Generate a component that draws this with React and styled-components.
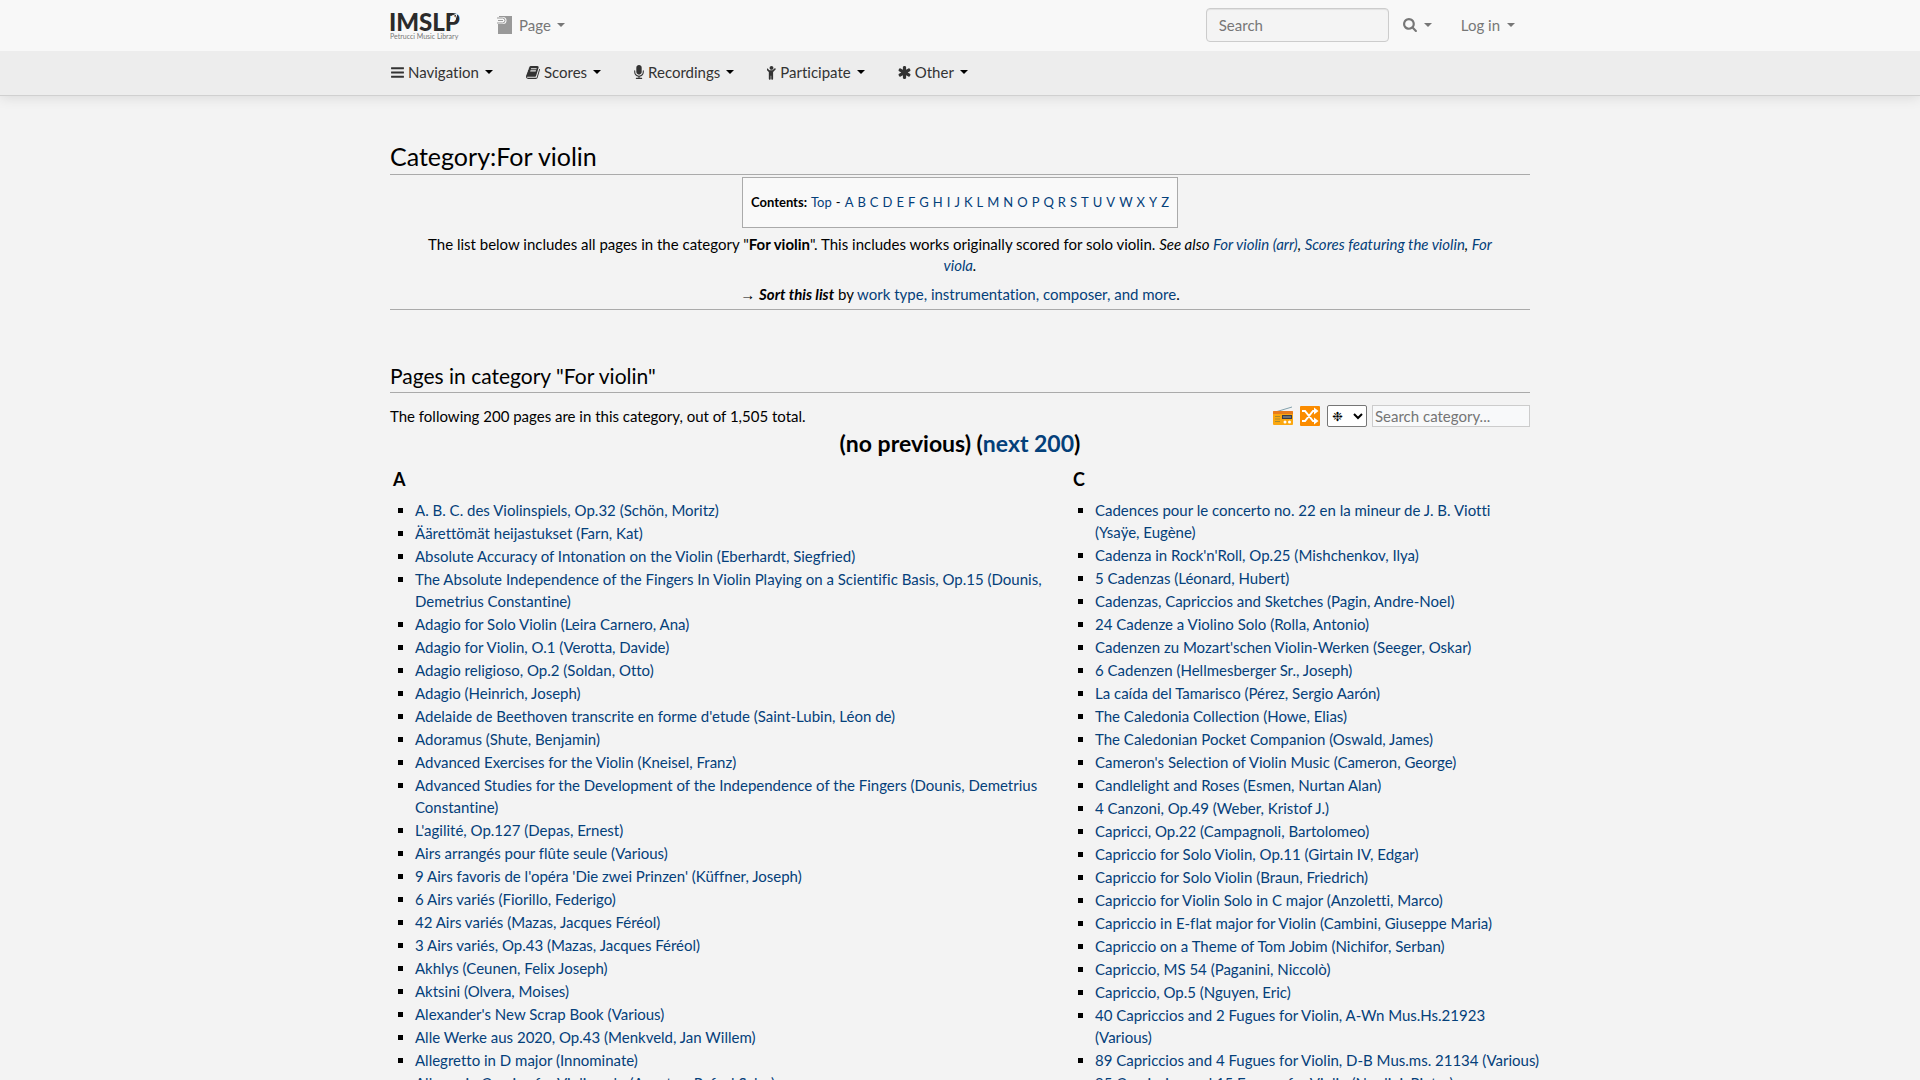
import React from "react";
import styled, { createGlobalStyle } from "styled-components";

const Global = createGlobalStyle`
  *, *::before, *::after { box-sizing: border-box; }
  body {
    margin: 0;
    background: #f3f3f3;
    color: #000;
    font-family: Lato, "Open Sans", sans-serif;
    font-size: 15px;
    line-height: 22px;
    font-variant-ligatures: none;
  }
  button, input, select { font: inherit; }
`;

const Container = styled.div`
  max-width: 1170px;
  margin: 0 auto;
  padding: 0 15px;
`;

const TopBar = styled.header`
  position: relative;
  z-index: 1;
  background: #f8f8f8;
`;

const TopRow = styled(Container)`
  display: flex;
  align-items: center;
  height: 51px;
  padding-bottom: 2px;
`;

const Logo = styled.a`
  display: block;
  width: 70px;
  height: 32px;
  margin-right: 22px;
`;

const Spacer = styled.div`
  flex: 1;
`;

const SearchBox = styled.input`
  width: 183px;
  height: 34px;
  padding: 0 12px;
  border: 1px solid #ccc;
  border-radius: 4px;
  background: #f4f4f4;
  box-shadow: inset 0 1px 1px rgba(0, 0, 0, 0.075);
  &::placeholder { color: #777; opacity: 1; }
`;

const MenuButton = styled.button`
  display: flex;
  align-items: center;
  gap: ${(p) => p.$gap || 4}px;
  padding: 0 ${(p) => p.$pad || 15}px;
  border: 0;
  background: none;
  color: ${(p) => (p.$muted ? "#777" : "#333")};
  cursor: pointer;
`;

const Caret = styled.span`
  margin-left: ${(p) => (p.$muted ? 0 : 2)}px;
  border-top: 4px solid ${(p) => (p.$muted ? "#777" : "#000")};
  border-left: 4px solid transparent;
  border-right: 4px solid transparent;
`;

const SubBar = styled.nav`
  background: #ededed;
  border-bottom: 1px solid #d0d0d0;
  box-shadow: 0 2px 12px rgba(0, 0, 0, 0.1);
`;

const SubRow = styled(Container)`
  display: flex;
  align-items: center;
  gap: 3px;
  height: 44px;
  padding-bottom: 2px;
  > button:first-child { padding-left: 1px; }
`;

const Main = styled(Container).attrs({ as: "main" })`
  padding-top: 43px;
`;

const Title = styled.h1`
  margin: 0;
  padding-bottom: 1px;
  border-bottom: 1px solid #aaa;
  font-size: 25px;
  line-height: 34px;
  font-weight: 400;
`;

const Subtitle = styled.h2`
  margin: 51px 0 0;
  padding-bottom: 1px;
  border-bottom: 1px solid #aaa;
  font-size: 21px;
  line-height: 30px;
  font-weight: 400;
`;

const Link = styled.a`
  color: #04407a;
  text-decoration: none;
  &:hover { text-decoration: underline; }
`;

const Intro = styled.div`
  display: flex;
  flex-direction: column;
  align-items: center;
  padding: 2px 24px 4px;
  border-bottom: 1px solid #aaa;
  text-align: center;
  line-height: 21px;
`;

const Toc = styled.div`
  display: flex;
  flex-wrap: wrap;
  gap: 4px;
  padding: 13px 8px 14px;
  border: 1px solid #aaa;
  background: #f9f9f9;
  font-size: 13px;
  line-height: 22px;
`;

const Paragraph = styled.p`
  margin: ${(p) => p.$top}px 0 0;
`;

const Arrow = styled.span`
  font-family: "Open Sans", sans-serif;
`;

const Summary = styled.div`
  display: flex;
  align-items: center;
  gap: 5px;
  padding-top: 12px;
`;

const IconButton = styled.button`
  display: flex;
  margin-right: 2px;
  padding: 0;
  border: 0;
  background: none;
`;

const CategorySelect = styled.select`
  width: 40px;
  height: 22px;
  border: 1px solid #767676;
  border-radius: 2px;
  background: #fff;
  color: #000;
  font-family: "DejaVu Sans", sans-serif;
  font-size: 13px;
`;

const CategorySearch = styled.input`
  width: 158px;
  height: 22px;
  padding: 1px 2px;
  border: 1px solid #ccc;
  background: #f8f9fa;
  &::placeholder { color: #757575; opacity: 1; }
`;

const Pager = styled.div`
  text-align: center;
  font-size: 23px;
  line-height: 33px;
  font-weight: 700;
`;

const Columns = styled.div`
  display: grid;
  grid-template-columns: minmax(0, 680fr) minmax(0, 460fr);
`;

const Column = styled.section`
  padding: 7px 3px 0;
`;

const Letter = styled.h3`
  margin: 0;
  font-size: 18px;
  line-height: 24px;
`;

const List = styled.ul`
  margin: 8px 0 0;
  padding: 0 0 0 22px;
  list-style: square;
`;

const Item = styled.li`
  margin-bottom: 1px;
  white-space: ${(p) => (p.$oneLine ? "nowrap" : "normal")};
`;

const paths = {
  bars: "M1664 1344v128q0 26-19 45t-45 19h-1408q-26 0-45-19t-19-45v-128q0-26 19-45t45-19h1408q26 0 45 19t19 45zm0-512v128q0 26-19 45t-45 19h-1408q-26 0-45-19t-19-45v-128q0-26 19-45t45-19h1408q26 0 45 19t19 45zm0-512v128q0 26-19 45t-45 19h-1408q-26 0-45-19t-19-45v-128q0-26 19-45t45-19h1408q26 0 45 19t19 45z",
  book: "M1703 478q40 57 18 129l-275 906q-19 64-76.5 107.5t-122.5 43.5h-923q-77 0-148.5-53.5t-99.5-131.5q-24-67-2-127 0-4 3-27t4-37q1-8-3-21.5t-3-19.5q2-11 8-21t16.5-23.5 16.5-23.5q23-38 45-91.5t30-91.5q3-10 .5-30t-.5-28q3-11 17-28t17-23q21-36 42-92t25-90q1-9-2.5-32t.5-28q4-13 22-30.5t22-22.5q19-26 42.5-84.5t27.5-96.5q1-8-3-25.5t-2-26.5q2-8 9-18t18-23 17-21q8-12 16.5-30.5t15-35 16-36 19.5-32 26.5-23.5 36-11.5 47.5 5.5l-1 3q38-9 51-9h761q74 0 114 56t18 130l-274 906q-36 119-71.5 153.5t-128.5 34.5h-869q-27 0-38 15-11 16-1 43 24 70 144 70h923q29 0 56-15.5t35-41.5l300-987q7-22 5-57 38 15 59 43zm-1064 2q-4 13 2 22.5t20 9.5h608q13 0 25.5-9.5t16.5-22.5l21-64q4-13-2-22.5t-20-9.5h-608q-13 0-25.5 9.5t-16.5 22.5zm-83 256q-4 13 2 22.5t20 9.5h608q13 0 25.5-9.5t16.5-22.5l21-64q4-13-2-22.5t-20-9.5h-608q-13 0-25.5 9.5t-16.5 22.5z",
  mic: "M1472 704v128q0 221-147.5 384.5t-364.5 187.5v132h256q26 0 45 19t19 45-19 45-45 19h-640q-26 0-45-19t-19-45 19-45 45-19h256v-132q-217-24-364.5-187.5t-147.5-384.5v-128q0-26 19-45t45-19 45 19 19 45v128q0 185 131.5 316.5t316.5 131.5 316.5-131.5 131.5-316.5v-128q0-26 19-45t45-19 45 19 19 45zm-256-384v512q0 132-94 226t-226 94-226-94-94-226v-512q0-132 94-226t226-94 226 94 94 226z",
  child: "M1380 540l-292 292v824q0 46-33 79t-79 33-79-33-33-79v-384h-64v384q0 46-33 79t-79 33-79-33-33-79v-824l-292-292q-28-28-28-68t28-68q29-28 68.5-28t67.5 28l228 228h368l228-228q28-28 68-28t68 28q28 29 28 68.5t-28 67.5zm-260-188q0 93-65.5 158.5t-158.5 65.5-158.5-65.5-65.5-158.5 65.5-158.5 158.5-65.5 158.5 65.5 65.5 158.5z",
  asterisk: "M1546 1050q46 26 59.5 77.5t-12.5 97.5l-64 110q-26 46-77.5 59.5t-97.5-12.5l-266-153v307q0 52-38 90t-90 38h-128q-52 0-90-38t-38-90v-307l-266 153q-46 26-97.5 12.5t-77.5-59.5l-64-110q-26-46-12.5-97.5t59.5-77.5l266-154-266-154q-46-26-59.5-77.5t12.5-97.5l64-110q26-46 77.5-59.5t97.5 12.5l266 153v-307q0-52 38-90t90-38h128q52 0 90 38t38 90v307l266-153q46-26 97.5-12.5t77.5 59.5l64 110q26 46 12.5 97.5t-59.5 77.5l-266 154z",
  search: "M1216 832q0-185-131.5-316.5t-316.5-131.5-316.5 131.5-131.5 316.5 131.5 316.5 316.5 131.5 316.5-131.5 131.5-316.5zm512 832q0 52-38 90t-90 38q-54 0-90-38l-343-342q-179 124-399 124-143 0-273.5-55.5t-225-150-150-225-55.5-273.5 55.5-273.5 150-225 225-150 273.5-55.5 273.5 55.5 225 150 150 225 55.5 273.5q0 220-124 399l343 343q37 37 37 90z",
};

/* Each glyph sits in a 1792-unit square; left and width trim it to its own advance. */
function Glyph({ name, left = 128, width = 1536 }) {
  return (
    <svg
      width={Math.round((width * 15) / 1792)}
      height="15"
      viewBox={`${left} 0 ${width} 1792`}
      fill="currentColor"
      aria-hidden="true"
    >
      <path d={paths[name]} />
    </svg>
  );
}

function LogoMark() {
  return (
    <svg width="70" height="32" viewBox="0 0 70 32" role="img" aria-label="IMSLP Petrucci Music Library">
      <text x="-1" y="22" fontFamily="Lato, sans-serif" fontWeight="900" fontSize="24" fill="#2b2b2b">IMSLP</text>
      <path d="M60 13l2-6 5-2-2 6" fill="none" stroke="#f8f8f8" strokeWidth="1" />
      <text x="0" y="30" fontFamily="Lato, sans-serif" fontSize="7" fill="#777">Petrucci Music Library</text>
    </svg>
  );
}

function PageIcon() {
  return (
    <svg width="16" height="18" viewBox="0 0 16 18" aria-hidden="true">
      <path d="M2 0h13v18H1V8h5a3.500 3.500 0 0 0 0-7H2z" fill="#999" />
      <path d="M0 2h5.500a2.500 2.500 0 0 1 0 5H0M1 4.500h5" fill="none" stroke="#999" />
    </svg>
  );
}

function RadioIcon() {
  return (
    <svg width="20" height="20" viewBox="0 0 20 20" aria-hidden="true">
      <path d="M4 5.500 19 1" stroke="#82a1ad" strokeWidth="1" />
      <rect y="5" width="20" height="14" rx="1" fill="#fba70f" />
      <path d="M0 6a1 1 0 0 1 1-1h18a1 1 0 0 1 1 1v2H0z" fill="#e87b1c" />
      <path d="M2 10.500h5M2 13h5M2 15.500h5" stroke="#a98a2e" />
      <rect x="9" y="9" width="10" height="4" fill="#3a3a46" />
      <path d="M10 11h8" stroke="#9aa" />
      <circle cx="12" cy="16" r="1.500" fill="#fff" />
      <circle cx="16.500" cy="16" r="1.500" fill="#fff" />
    </svg>
  );
}

function ShuffleIcon() {
  return (
    <svg width="20" height="20" viewBox="0 0 20 20" aria-hidden="true">
      <rect width="20" height="20" rx="1" fill="#fb8c00" />
      <path d="M2 5h3l8 10h2M2 15h3l8-10h2" fill="none" stroke="#fff" strokeWidth="2" />
      <path d="m14 1.500 4.500 3.500-4.500 3.500zM14 11.500l4.500 3.500-4.500 3.500z" fill="#fff" />
    </svg>
  );
}

const menu = [
  { label: "Navigation", glyph: "bars" },
  { label: "Scores", glyph: "book", left: 64, width: 1664 },
  { label: "Recordings", glyph: "mic", left: 320, width: 1152 },
  { label: "Participate", glyph: "child", left: 384, width: 1024 },
  { label: "Other", glyph: "asterisk", left: 128, width: 1536 },
];

const columns = [
  {
    letter: "A",
    works: [
      "A. B. C. des Violinspiels, Op.32 (Schön, Moritz)",
      "Äärettömät heijastukset (Farn, Kat)",
      "Absolute Accuracy of Intonation on the Violin (Eberhardt, Siegfried)",
      "The Absolute Independence of the Fingers In Violin Playing on a Scientific Basis, Op.15 (Dounis, Demetrius Constantine)",
      "Adagio for Solo Violin (Leira Carnero, Ana)",
      "Adagio for Violin, O.1 (Verotta, Davide)",
      "Adagio religioso, Op.2 (Soldan, Otto)",
      "Adagio (Heinrich, Joseph)",
      "Adelaide de Beethoven transcrite en forme d'etude (Saint-Lubin, Léon de)",
      "Adoramus (Shute, Benjamin)",
      "Advanced Exercises for the Violin (Kneisel, Franz)",
      "Advanced Studies for the Development of the Independence of the Fingers (Dounis, Demetrius Constantine)",
      "L'agilité, Op.127 (Depas, Ernest)",
      "Airs arrangés pour flûte seule (Various)",
      "9 Airs favoris de l'opéra 'Die zwei Prinzen' (Küffner, Joseph)",
      "6 Airs variés (Fiorillo, Federigo)",
      "42 Airs variés (Mazas, Jacques Féréol)",
      "3 Airs variés, Op.43 (Mazas, Jacques Féréol)",
      "Akhlys (Ceunen, Felix Joseph)",
      "Aktsini (Olvera, Moises)",
      "Alexander's New Scrap Book (Various)",
      "Alle Werke aus 2020, Op.43 (Menkveld, Jan Willem)",
      "Allegretto in D major (Innominate)",
      "Allegro in Caprice for Violin solo (Agustos, Rafael Salas)",
    ],
  },
  {
    letter: "C",
    works: [
      "Cadences pour le concerto no. 22 en la mineur de J. B. Viotti (Ysaÿe, Eugène)",
      "Cadenza in Rock'n'Roll, Op.25 (Mishchenkov, Ilya)",
      "5 Cadenzas (Léonard, Hubert)",
      "Cadenzas, Capriccios and Sketches (Pagin, Andre-Noel)",
      "24 Cadenze a Violino Solo (Rolla, Antonio)",
      "Cadenzen zu Mozart'schen Violin-Werken (Seeger, Oskar)",
      "6 Cadenzen (Hellmesberger Sr., Joseph)",
      "La caída del Tamarisco (Pérez, Sergio Aarón)",
      "The Caledonia Collection (Howe, Elias)",
      "The Caledonian Pocket Companion (Oswald, James)",
      "Cameron's Selection of Violin Music (Cameron, George)",
      "Candlelight and Roses (Esmen, Nurtan Alan)",
      "4 Canzoni, Op.49 (Weber, Kristof J.)",
      "Capricci, Op.22 (Campagnoli, Bartolomeo)",
      "Capriccio for Solo Violin, Op.11 (Girtain IV, Edgar)",
      "Capriccio for Solo Violin (Braun, Friedrich)",
      "Capriccio for Violin Solo in C major (Anzoletti, Marco)",
      "Capriccio in E-flat major for Violin (Cambini, Giuseppe Maria)",
      "Capriccio on a Theme of Tom Jobim (Nichifor, Serban)",
      "Capriccio, MS 54 (Paganini, Niccolò)",
      "Capriccio, Op.5 (Nguyen, Eric)",
      "40 Capriccios and 2 Fugues for Violin, A-Wn Mus.Hs.21923 (Various)",
      "89 Capriccios and 4 Fugues for Violin, D-B Mus.ms. 21134 (Various)",
      "95 Capriccios and 15 Fugues for Violin (Nardini, Pietro)",
    ],
  },
];

export default function App() {
  return (
    <>
      <Global />
      <TopBar>
        <TopRow>
          <Logo href="#"><LogoMark /></Logo>
          <MenuButton $muted $gap={6}><PageIcon />Page<Caret $muted /></MenuButton>
          <Spacer />
          <SearchBox type="search" placeholder="Search" aria-label="Search" />
          <MenuButton $muted $gap={7} $pad={14} aria-label="Search options"><Glyph name="search" left={64} width={1664} /><Caret $muted /></MenuButton>
          <MenuButton $muted $gap={7}>Log in<Caret $muted /></MenuButton>
        </TopRow>
      </TopBar>
      <SubBar>
        <SubRow>
          {menu.map((m) => (
            <MenuButton key={m.label}>
              <Glyph name={m.glyph} left={m.left} width={m.width} />
              {m.label}
              <Caret />
            </MenuButton>
          ))}
        </SubRow>
      </SubBar>
      <Main>
        <Title>Category:For violin</Title>
        <Intro>
          <Toc>
            <b>Contents:</b>
            <Link href="#top">Top</Link>
            <span>-</span>
            {"ABCDEFGHIJKLMNOPQRSTUVWXYZ".split("").map((c) => (
              <Link key={c} href={`#${c}`}>{c}</Link>
            ))}
          </Toc>
          <Paragraph $top={6}>
            The list below includes all pages in the category "<b>For violin</b>". This includes works originally
            scored for solo violin. <i>See also <Link href="#">For violin (arr)</Link>, <Link href="#">Scores
            featuring the violin</Link>, <Link href="#">For viola</Link>.</i>
          </Paragraph>
          <Paragraph $top={8}>
            <Arrow>→</Arrow> <b><i>Sort this list</i></b> by <Link href="#">work type, instrumentation, composer, and more</Link>.
          </Paragraph>
        </Intro>
        <Subtitle>Pages in category "For violin"</Subtitle>
        <Summary>
          <span>The following 200 pages are in this category, out of 1,505 total.</span>
          <Spacer />
          <IconButton aria-label="Radio"><RadioIcon /></IconButton>
          <IconButton aria-label="Random page"><ShuffleIcon /></IconButton>
          <CategorySelect aria-label="Category filter"><option>❉</option></CategorySelect>
          <CategorySearch placeholder="Search category..." aria-label="Search category" />
        </Summary>
        <Pager>(no previous) (<Link href="#">next 200</Link>)</Pager>
        <Columns>
          {columns.map((col) => (
            <Column key={col.letter}>
              <Letter>{col.letter}</Letter>
              <List>
                {col.works.map((w) => (
                  <Item key={w} $oneLine={w.startsWith("89 ")}><Link href="#">{w}</Link></Item>
                ))}
              </List>
            </Column>
          ))}
        </Columns>
      </Main>
    </>
  );
}
